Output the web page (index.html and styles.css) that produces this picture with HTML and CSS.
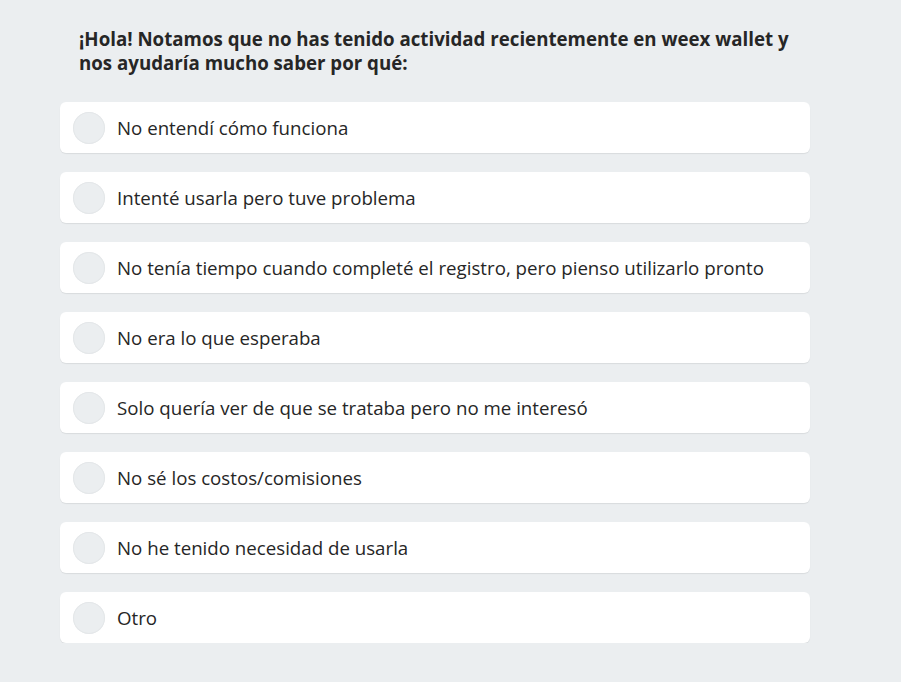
FILE: index.html
```html
<!DOCTYPE html>
<html lang="es">

<head>
  <meta charset="UTF-8">
  <meta name="viewport" content="width=device-width, initial-scale=1.0">
  <title>Encuesta</title>
  <link rel="stylesheet" href="styles.css">
</head>

<body>
  <div class="survey">
    <h2 class="question">¡Hola! Notamos que no has tenido actividad recientemente en weex wallet y nos ayudaría mucho saber por qué:</h2>
    <ul class="options">
      <li class="option"><span class="radio"></span><span class="label">No entendí cómo funciona</span></li>
      <li class="option"><span class="radio"></span><span class="label">Intenté usarla pero tuve problema</span></li>
      <li class="option"><span class="radio"></span><span class="label">No tenía tiempo cuando completé el registro, pero pienso utilizarlo pronto</span></li>
      <li class="option"><span class="radio"></span><span class="label">No era lo que esperaba</span></li>
      <li class="option"><span class="radio"></span><span class="label">Solo quería ver de que se trataba pero no me interesó</span></li>
      <li class="option"><span class="radio"></span><span class="label">No sé los costos/comisiones</span></li>
      <li class="option"><span class="radio"></span><span class="label">No he tenido necesidad de usarla</span></li>
      <li class="option"><span class="radio"></span><span class="label">Otro</span></li>
    </ul>
  </div>
</body>

</html>
```

FILE: styles.css
```css
body {
  font-family: 'Open Sans', sans-serif;
  background-color: #ebeef0;
  margin: 0;
  padding: 0;
  color: #2b2b2b;
}

.survey {
  width: 750px;
  padding: 27px 0 0 60px;
}

.question {
  margin: 0 0 27px 0;
  padding: 0 0 0 19px;
  font-size: 18.7px;
  line-height: 24px;
  font-weight: 700;
  color: #262626;
}

.options {
  list-style: none;
  margin: 0;
  padding: 0;
  display: flex;
  flex-direction: column;
  gap: 19px;
}

.option {
  display: flex;
  align-items: center;
  gap: 12px;
  height: 51px;
  padding: 0 13px;
  background-color: #fff;
  border-radius: 6px;
  box-shadow: 0 1px 1px rgba(0, 0, 0, 0.08);
  cursor: pointer;
}

.radio {
  width: 32px;
  height: 32px;
  flex-shrink: 0;
  border-radius: 50%;
  background-color: #ebeef0;
  box-shadow: inset 0 0 0 1px #e4e7e9;
}

.label {
  font-size: 18.7px;
  color: #262626;
}
```
